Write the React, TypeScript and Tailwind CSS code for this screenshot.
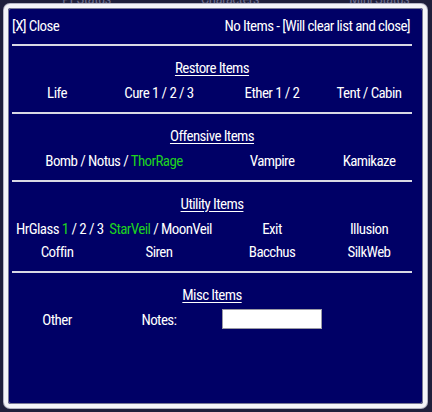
const font = { fontFamily: '"Roboto Condensed", "Liberation Sans", sans-serif' };

const Green = ({ children }: { children: React.ReactNode }) => (
  <span className="text-[#1ed21e]">{children}</span>
);

const Section = ({ title, top = 'pt-[10px]', children }: { title: string; top?: string; children: React.ReactNode }) => (
  <div className={`${top} pb-[10px]`}>
    <div className="flex h-[23px] items-center justify-center pt-[2px]">
      <span className="underline underline-offset-[2px]">{title}</span>
    </div>
    {children}
  </div>
);

const Row = ({ children }: { children: React.ReactNode }) => (
  <div className="grid h-[23px] grid-cols-[90px_114px_112px_82px] items-center pt-[3px] text-center">{children}</div>
);

const Rule = () => <div className="h-[2px] bg-[#d8d8e4]" />;

export default function App() {
  return (
    <div
      className="h-[412px] w-[432px] overflow-hidden bg-[#1f1f3c] text-[15px] tracking-[-0.6px] text-white"
      style={font}
    >
      {/* faint content behind the window */}
      <div className="h-[3px] overflow-hidden text-[#6a6a8a]">
        <div className="-mt-[12px] flex gap-[90px] pl-[62px]">
          <span>Pr Status</span>
          <span>Characters</span>
          <span>Mini Status</span>
        </div>
      </div>

      <div className="ml-[3px] h-[406px] w-[425px] rounded-[7px] bg-[#b4b4c4] p-[1px]">
        <div className="h-full rounded-[6px] border-[4px] border-[#f4f4f8]">
          <div className="h-full rounded-[3px] bg-[#000066] pl-[4px] pr-[11px] pt-[4px] shadow-[inset_0_0_0_1px_#7a7a96]">
            <div className="flex h-[24px] items-center justify-between pr-[2px] pt-[4px]">
              <span className="cursor-pointer">[X] Close</span>
              <span className="cursor-pointer">No Items - [Will clear list and close]</span>
            </div>
            <div className="h-[8px]" />
            <Rule />

            <Section title="Restore Items">
              <Row>
                <span>Life</span>
                <span>Cure 1 / 2 / 3</span>
                <span>Ether 1 / 2</span>
                <span>Tent / Cabin</span>
              </Row>
            </Section>
            <Rule />

            <Section title="Offensive Items" top="pt-[10px]">
              <Row>
                <span className="col-span-2">
                  Bomb / Notus / <Green>ThorRage</Green>
                </span>
                <span>Vampire</span>
                <span>Kamikaze</span>
              </Row>
            </Section>
            <Rule />

            <Section title="Utility Items">
              <Row>
                <span className="col-span-2">
                  HrGlass <Green>1</Green> / 2 / 3{'\u00a0\u00a0'}<Green>StarVeil</Green> / MoonVeil
                </span>
                <span>Exit</span>
                <span>Illusion</span>
              </Row>
              <Row>
                <span>Coffin</span>
                <span>Siren</span>
                <span>Bacchus</span>
                <span>SilkWeb</span>
              </Row>
            </Section>
            <Rule />

            <Section title="Misc Items">
              <div className="grid h-[23px] grid-cols-[90px_114px_112px_82px] items-center text-center">
                <span className="pt-[3px]">Other</span>
                <span className="pt-[3px]">Notes:</span>
                <span className="flex justify-center pt-[1px]">
                  <input
                    type="text"
                    className="h-[20px] w-[100px] border border-[#9a9aa4] bg-white text-[13px] text-black outline-none"
                  />
                </span>
                <span />
              </div>
            </Section>
          </div>
        </div>
      </div>
    </div>
  );
}
